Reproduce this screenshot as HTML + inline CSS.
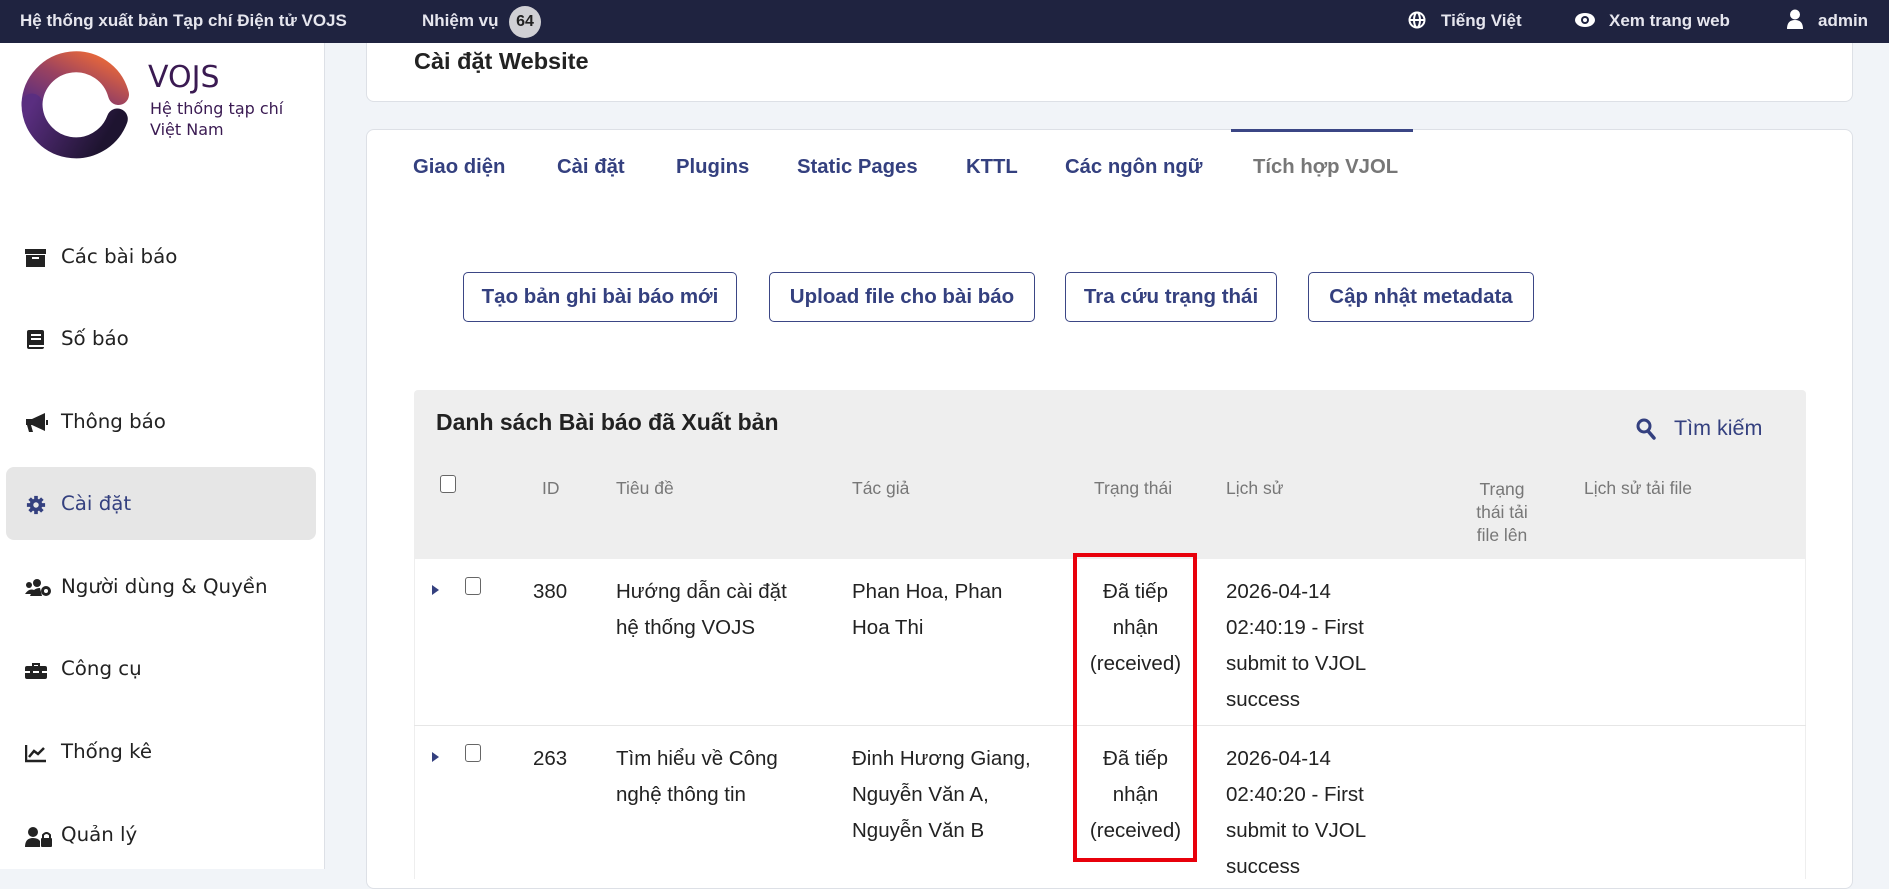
<!DOCTYPE html>
<html><head><meta charset="utf-8">
<style>
*{margin:0;padding:0;box-sizing:border-box}
body{width:1889px;height:869px;overflow:hidden;background:#f1f4f8;font-family:"Liberation Sans",Arial,sans-serif;position:relative}
.a{position:absolute;white-space:nowrap}
#top{position:absolute;left:0;top:0;width:1889px;height:43px;background:#1f2340;color:#e6e6ee;font-size:17px;font-weight:bold;z-index:10}
#side{position:absolute;left:0;top:43px;width:325px;height:826px;background:#fff;border-right:1px solid #dde0e6}
.nav{position:absolute;left:0;width:325px;font-family:"DejaVu Sans",sans-serif;font-size:19.8px;color:#222}
.nav .t{position:absolute;left:61px;top:-13px}
.nav svg{position:absolute;left:25px;top:-10px}
.card{position:absolute;background:#fff;border:1px solid #dde0e6;border-radius:8px}
.tab{position:absolute;top:156px;font-size:20.3px;font-weight:bold;color:#34407f}
.btn{position:absolute;top:272px;height:50px;border:1px solid #3b4685;border-radius:5px;color:#34407f;font-weight:bold;font-size:20.5px;text-align:center;line-height:47px;background:#fff}
.th{position:absolute;font-size:17.5px;color:#777;line-height:20px}
.td{position:absolute;font-size:20.5px;color:#222;line-height:36px}
.cb{position:absolute;width:16px;height:18px;border:1.5px solid #666;border-radius:3px;background:#fff}
.tri{position:absolute;width:0;height:0;border-top:5px solid transparent;border-bottom:5px solid transparent;border-left:7px solid #34407f}
</style></head><body>
<div id="top">
 <div class="a" style="left:20px;top:11px">Hệ thống xuất bản Tạp chí Điện tử VOJS</div>
 <div class="a" style="left:422px;top:11px">Nhiệm vụ</div>
 <div class="a" style="left:509px;top:6px;width:32px;height:32px;border-radius:16px;background:#d0d0d4;color:#222;text-align:center;line-height:32px;font-size:16px">64</div>
 <svg class="a" style="left:1408px;top:11px" width="18" height="18" viewBox="0 0 18 18"><circle cx="9" cy="9" r="7.5" fill="none" stroke="#fff" stroke-width="2"/><ellipse cx="9" cy="9" rx="3" ry="7.5" fill="none" stroke="#fff" stroke-width="2"/><line x1="1.5" y1="9" x2="16.5" y2="9" stroke="#fff" stroke-width="2"/></svg>
 <div class="a" style="left:1441px;top:11px">Tiếng Việt</div>
 <svg class="a" style="left:1574px;top:12px" width="22" height="16" viewBox="0 0 22 16"><ellipse cx="11" cy="8" rx="10" ry="7" fill="#fff"/><circle cx="11" cy="8" r="4" fill="#1f2340"/><circle cx="11" cy="8" r="2" fill="#fff"/></svg>
 <div class="a" style="left:1609px;top:11px">Xem trang web</div>
 <svg class="a" style="left:1786px;top:9px" width="18" height="20" viewBox="0 0 18 20"><circle cx="9" cy="5.5" r="5" fill="#fff"/><path d="M1 20 Q1 11 9 11 Q17 11 17 20Z" fill="#fff"/></svg>
 <div class="a" style="left:1818px;top:11px">admin</div>
</div>

<div id="side">
 <svg class="a" style="left:10px;top:1px" width="130" height="120" viewBox="-4 -4 130 120">
  <defs><linearGradient id="g1" x1="0" y1="1" x2="1" y2="0"><stop offset="0" stop-color="#5a2e80"/><stop offset="0.5" stop-color="#9a4260"/><stop offset="1" stop-color="#ec6a38"/></linearGradient>
  <linearGradient id="g2" x1="0" y1="0" x2="1" y2="0.3"><stop offset="0" stop-color="#5a2e80"/><stop offset="1" stop-color="#1e1430"/></linearGradient></defs>
  <path d="M104.5 46.5 A44 44 0 0 0 18 56" fill="none" stroke="url(#g1)" stroke-width="21" stroke-linecap="round"/>
  <path d="M18 56 A44 44 0 0 0 103.3 71" fill="none" stroke="url(#g2)" stroke-width="21" stroke-linecap="round"/>
 </svg>
 <div class="a" style="left:148px;top:17px;font-size:30px;color:#3a1a52;font-family:'DejaVu Sans',sans-serif">VOJS</div>
 <div class="a" style="left:150px;top:55px;font-size:16px;color:#3a1a52;line-height:21px;font-family:'DejaVu Sans',sans-serif">Hệ thống tạp chí<br>Việt Nam</div>

 <div class="a" style="left:6px;top:424px;width:310px;height:73px;background:#e6e6e6;border-radius:8px"></div>

 <div class="nav" style="top:215px"><svg width="22" height="20" viewBox="0 0 22 20"><rect x="0" y="1" width="21" height="5" fill="#222"/><rect x="1" y="7" width="19" height="12" fill="#222"/><rect x="7" y="9" width="7" height="2" fill="#fff"/></svg><span class="t">Các bài báo</span></div>
 <div class="nav" style="top:297px"><svg width="22" height="20" viewBox="0 0 22 20"><rect x="2" y="0" width="17" height="19" rx="2" fill="#222"/><rect x="6" y="4" width="10" height="2" fill="#fff"/><rect x="6" y="8" width="10" height="2" fill="#fff"/><rect x="4" y="15" width="15" height="2" fill="#fff"/></svg><span class="t">Số báo</span></div>
 <div class="nav" style="top:380px"><svg width="24" height="20" viewBox="0 0 24 20"><path d="M1 6 L7 6 L20 0 L20 18 L7 12 L6 12 L8 19 L4 19 L2 12 L1 12Z" fill="#222"/><rect x="21" y="7" width="2" height="5" fill="#222"/></svg><span class="t">Thông báo</span></div>
 <div class="nav" style="top:462px"><svg width="22" height="20" viewBox="0 0 22 22"><circle cx="11" cy="11" r="7" fill="#34407f"/><g stroke="#34407f" stroke-width="4"><line x1="11" y1="1" x2="11" y2="21"/><line x1="1" y1="11" x2="21" y2="11"/><line x1="4" y1="4" x2="18" y2="18"/><line x1="18" y1="4" x2="4" y2="18"/></g><circle cx="11" cy="11" r="3" fill="#e6e6e6"/></svg><span class="t" style="color:#34407f">Cài đặt</span></div>
 <div class="nav" style="top:545px"><svg width="28" height="20" viewBox="0 0 28 20"><circle cx="4" cy="7" r="3" fill="#222"/><circle cx="12" cy="5" r="4" fill="#222"/><path d="M0 16 Q4 10 9 12 L9 16Z M5 18 Q8 10 15 10 L17 18Z" fill="#222"/><circle cx="21" cy="13" r="5" fill="#222"/><circle cx="21" cy="13" r="2" fill="#fff"/></svg><span class="t">Người dùng &amp; Quyền</span></div>
 <div class="nav" style="top:627px"><svg width="22" height="20" viewBox="0 0 22 20"><path d="M7 3 L15 3 L15 6 L13 6 L13 5 L9 5 L9 6 L7 6Z" fill="#222"/><rect x="0" y="6" width="22" height="13" rx="2" fill="#222"/><rect x="0" y="11" width="22" height="2" fill="#fff"/><rect x="5" y="10" width="3" height="4" fill="#222"/><rect x="14" y="10" width="3" height="4" fill="#222"/></svg><span class="t">Công cụ</span></div>
 <div class="nav" style="top:710px"><svg width="22" height="20" viewBox="0 0 22 20"><path d="M1 2 L1 18 L21 18" fill="none" stroke="#222" stroke-width="2.5"/><path d="M4 14 L9 8 L13 11 L19 5" fill="none" stroke="#222" stroke-width="2.5"/></svg><span class="t">Thống kê</span></div>
 <div class="nav" style="top:793px"><svg width="28" height="22" viewBox="0 0 28 22"><circle cx="8" cy="6" r="5" fill="#222"/><path d="M0 21 Q0 12 8 12 Q13 12 15 15 L15 21Z" fill="#222"/><rect x="16" y="12" width="11" height="9" rx="1" fill="#222"/><path d="M18 12 L18 9 Q21.5 5 25 9 L25 12" fill="none" stroke="#222" stroke-width="2"/></svg><span class="t">Quản lý</span></div>
</div>

<div class="card" style="left:366px;top:-10px;width:1487px;height:112px"></div>
<div class="a" style="left:414px;top:48px;font-size:23.5px;font-weight:bold;color:#222">Cài đặt Website</div>

<div class="card" style="left:366px;top:129px;width:1487px;height:760px"></div>
<div class="a" style="left:1231px;top:129px;width:182px;height:3px;background:#3b4685"></div>
<div class="tab" style="left:413px">Giao diện</div>
<div class="tab" style="left:557px">Cài đặt</div>
<div class="tab" style="left:676px">Plugins</div>
<div class="tab" style="left:797px">Static Pages</div>
<div class="tab" style="left:966px">KTTL</div>
<div class="tab" style="left:1065px">Các ngôn ngữ</div>
<div class="tab" style="left:1253px;color:#777">Tích hợp VJOL</div>

<div class="btn" style="left:463px;width:274px">Tạo bản ghi bài báo mới</div>
<div class="btn" style="left:769px;width:266px">Upload file cho bài báo</div>
<div class="btn" style="left:1065px;width:212px">Tra cứu trạng thái</div>
<div class="btn" style="left:1308px;width:226px">Cập nhật metadata</div>

<div class="a" style="left:414px;top:390px;width:1392px;height:169px;background:#eeeeee;border-radius:4px 4px 0 0"></div>
<div class="a" style="left:414px;top:559px;width:1392px;height:320px;background:#fff;border-left:1px solid #eee;border-right:1px solid #eee"></div>
<div class="a" style="left:414px;top:725px;width:1392px;height:1px;background:#e6e6e6"></div>
<div class="a" style="left:436px;top:409px;font-size:23px;font-weight:bold;color:#222">Danh sách Bài báo đã Xuất bản</div>
<svg class="a" style="left:1636px;top:418px" width="20" height="22" viewBox="0 0 20 22"><circle cx="8" cy="8" r="6" fill="none" stroke="#34407f" stroke-width="3"/><line x1="12" y1="13" x2="18" y2="20" stroke="#34407f" stroke-width="3.5" stroke-linecap="round"/></svg>
<div class="a" style="left:1674px;top:416px;font-size:21.5px;color:#34407f">Tìm kiếm</div>

<div class="cb" style="left:440px;top:475px"></div>
<div class="th" style="left:542px;top:478px">ID</div>
<div class="th" style="left:616px;top:478px">Tiêu đề</div>
<div class="th" style="left:852px;top:478px">Tác giả</div>
<div class="th" style="left:1094px;top:478px">Trạng thái</div>
<div class="th" style="left:1226px;top:478px">Lịch sử</div>
<div class="th" style="left:1472px;top:478px;text-align:center;width:60px;white-space:normal;line-height:23px">Trạng thái tải file lên</div>
<div class="th" style="left:1584px;top:478px">Lịch sử tải file</div>

<div class="tri" style="left:432px;top:585px"></div>
<div class="cb" style="left:465px;top:577px"></div>
<div class="td" style="left:533px;top:574px">380</div>
<div class="td" style="left:616px;top:574px">Hướng dẫn cài đặt<br>hệ thống VOJS</div>
<div class="td" style="left:852px;top:574px">Phan Hoa, Phan<br>Hoa Thi</div>
<div class="td" style="left:1083px;top:574px;width:105px;text-align:center">Đã tiếp<br>nhận<br>(received)</div>
<div class="td" style="left:1226px;top:574px">2026-04-14<br>02:40:19 - First<br>submit to VJOL<br>success</div>

<div class="tri" style="left:432px;top:752px"></div>
<div class="cb" style="left:465px;top:744px"></div>
<div class="td" style="left:533px;top:741px">263</div>
<div class="td" style="left:616px;top:741px">Tìm hiểu về Công<br>nghệ thông tin</div>
<div class="td" style="left:852px;top:741px">Đinh Hương Giang,<br>Nguyễn Văn A,<br>Nguyễn Văn B</div>
<div class="td" style="left:1083px;top:741px;width:105px;text-align:center">Đã tiếp<br>nhận<br>(received)</div>
<div class="td" style="left:1226px;top:741px">2026-04-14<br>02:40:20 - First<br>submit to VJOL<br>success</div>

<div class="a" style="left:1073px;top:553px;width:124px;height:309px;border:4px solid #e8000b"></div>
</body></html>
